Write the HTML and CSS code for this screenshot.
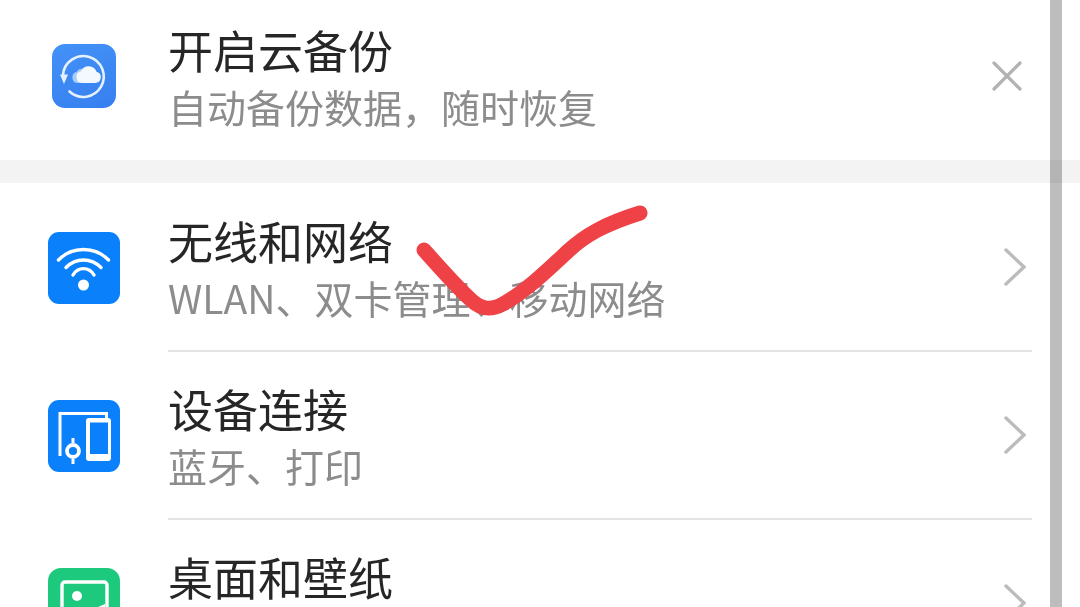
FILE: index.html
```html
<!DOCTYPE html>
<html lang="zh-CN">
<head>
    <meta charset="UTF-8">
    <title>设置</title>
    <link rel="stylesheet" href="styles.css">
</head>
<body>
    <div class="settings">
        <div class="group">
            <div class="row">
                <div class="icon icon-cloud">
                    <svg viewBox="0 0 64 64" width="64" height="64">
                        <path d="M17.5 47.5 A20.4 20.4 0 1 0 11 31" fill="none" stroke="#e6f1ff" stroke-width="2.6" stroke-linecap="round"/>
                        <path d="M8 30.5 L16 30.5 L12 40 Z" fill="#e6f1ff"/>
                        <path d="M26 39 a5.6 5.6 0 0 1 -1.5 -11 a7 7 0 0 1 7.5 -3 L32 39 Z" fill="#a9cdfa"/>
                        <path d="M30 39 a6 6 0 0 1 -1 -11.8 a8.5 8.5 0 0 1 15.6 0.6 a5.7 5.7 0 0 1 -1.6 11.2 Z" fill="#f4f9ff"/>
                    </svg>
                </div>
                <div class="row-body no-line">
                    <div class="row-text">
                        <div class="title">开启云备份</div>
                        <div class="sub">自动备份数据，随时恢复</div>
                    </div>
                    <svg class="close" viewBox="0 0 32 32" width="32" height="32">
                        <path d="M3 3 L29 29 M29 3 L3 29" fill="none" stroke="#000" stroke-opacity=".3" stroke-width="3.2" stroke-linecap="round"/>
                    </svg>
                </div>
            </div>
        </div>

        <div class="gap"></div>

        <div class="group group-main">
            <div class="row">
                <div class="icon icon-blue">
                    <svg viewBox="0 0 72 72" width="72" height="72">
                        <g fill="none" stroke="#fff" stroke-width="3.4" stroke-linecap="round">
                            <path d="M10.5 28 C24 14 47 14 60.5 28"/>
                            <path d="M18 35.5 C28 25.5 43 25.5 53 35.5"/>
                            <path d="M25 43 C30 34.5 41 34.5 46 43"/>
                        </g>
                        <circle cx="35.5" cy="53" r="5.5" fill="#fff"/>
                    </svg>
                </div>
                <div class="row-body">
                    <div class="row-text">
                        <div class="title">无线和网络</div>
                        <div class="sub">WLAN、双卡管理、移动网络</div>
                    </div>
                    <svg class="chevron" viewBox="0 0 22 38" width="22" height="38">
                        <path d="M2 2 L20 19 L2 36" fill="none" stroke="#bcbcbc" stroke-width="3.4" stroke-linecap="round" stroke-linejoin="miter"/>
                    </svg>
                </div>
            </div>
            <div class="row">
                <div class="icon icon-blue">
                    <svg viewBox="0 0 72 72" width="72" height="72">
                        <g fill="none" stroke="#fff">
                            <path d="M12 56 V13.5 H58.5 V18" stroke-width="3"/>
                            <circle cx="25" cy="51" r="6" stroke-width="3.8"/>
                            <path d="M25 38 V43 M25 59 V64" stroke-width="3"/>
                        </g>
                        <path d="M41 18 H60 a3 3 0 0 1 3 3 V58 a3 3 0 0 1 -3 3 H41 a3 3 0 0 1 -3 -3 V21 a3 3 0 0 1 3 -3 Z M42 22.5 V54 H60 V22.5 Z" fill="#fff" fill-rule="evenodd"/>
                    </svg>
                </div>
                <div class="row-body">
                    <div class="row-text">
                        <div class="title">设备连接</div>
                        <div class="sub">蓝牙、打印</div>
                    </div>
                    <svg class="chevron" viewBox="0 0 22 38" width="22" height="38">
                        <path d="M2 2 L20 19 L2 36" fill="none" stroke="#bcbcbc" stroke-width="3.4" stroke-linecap="round"/>
                    </svg>
                </div>
            </div>
            <div class="row">
                <div class="icon icon-green">
                    <svg viewBox="0 0 72 72" width="72" height="72">
                        <rect x="14" y="14" width="45" height="44" rx="3" fill="none" stroke="#fff" stroke-width="3.4"/>
                        <circle cx="29" cy="28" r="5" fill="#fff"/>
                        <path d="M16 52 C30 50 42 42 57 36 V56 H16 Z" fill="#fff"/>
                    </svg>
                </div>
                <div class="row-body">
                    <div class="row-text">
                        <div class="title">桌面和壁纸</div>
                    </div>
                    <svg class="chevron" viewBox="0 0 22 38" width="22" height="38">
                        <path d="M2 2 L20 19 L2 36" fill="none" stroke="#bcbcbc" stroke-width="3.4" stroke-linecap="round"/>
                    </svg>
                </div>
            </div>
        </div>
    </div>

    <!-- hand-drawn tick and the scrollbar sit on top of the list -->
    <div class="scrollbar"></div>
    <svg class="tick" viewBox="0 0 1080 607" width="1080" height="607">
        <path d="M424 250 C440 268 458 288 470 299 C480 309 490 311 503 304 C525 292 550 268 567 252 C585 235 605 224 640 213" fill="none" stroke="#ee4246" stroke-width="15" stroke-linecap="round" stroke-linejoin="round"/>
    </svg>
</body>
</html>
```

FILE: styles.css
```css
html, body {
    margin: 0;
    height: 607px;
    overflow: hidden;
}

body {
    position: relative;
    background-color: #ffffff;
    font-family: "Noto Sans CJK SC", "Noto Sans", sans-serif;
}

.settings {
    margin-top: -8px;
    filter: blur(0.4px);
}

.gap {
    height: 23px;
    background-color: #f3f3f3;
}

.group-main {
    padding-top: 1px;
}

.row {
    display: flex;
    align-items: center;
    height: 168px;
    padding-left: 48px;
}

.row-body {
    flex: 1;
    display: flex;
    align-items: center;
    justify-content: space-between;
    align-self: stretch;
    margin-left: 48px;
    margin-right: 48px;
    border-bottom: 2px solid #e4e4e4;
    box-sizing: border-box;
}

.row-body.no-line {
    border-bottom: none;
}

.row-text {
    display: flex;
    flex-direction: column;
    gap: 6px;
    height: 108px;
    padding-top: 3px;
}

.title {
    font-size: 45px;
    line-height: 51px;
    color: #262626;
}

.sub {
    font-size: 39px;
    line-height: 51px;
    color: #8c8c8c;
}

.icon {
    width: 72px;
    height: 72px;
    flex-shrink: 0;
    border-radius: 11px;
    display: flex;
    align-items: center;
    justify-content: center;
}

.icon svg {
    display: block;
}

.icon-cloud {
    width: 64px;
    height: 64px;
    margin: 0 4px;
    border-radius: 13px;
    background: linear-gradient(160deg, #4392f7, #367ff0);
}

.icon-blue {
    background-color: #0a80fb;
}

.icon-green {
    border-radius: 13px;
    background-color: #1dc97c;
}

.close {
    margin-right: 9px;
}

.chevron {
    margin-right: 6px;
}

.scrollbar {
    position: absolute;
    top: 0;
    bottom: 0;
    left: 1050px;
    width: 12px;
    background-color: rgba(0, 0, 0, 0.26);
}

.tick {
    position: absolute;
    top: 0;
    left: 0;
    filter: blur(0.4px);
}
```
